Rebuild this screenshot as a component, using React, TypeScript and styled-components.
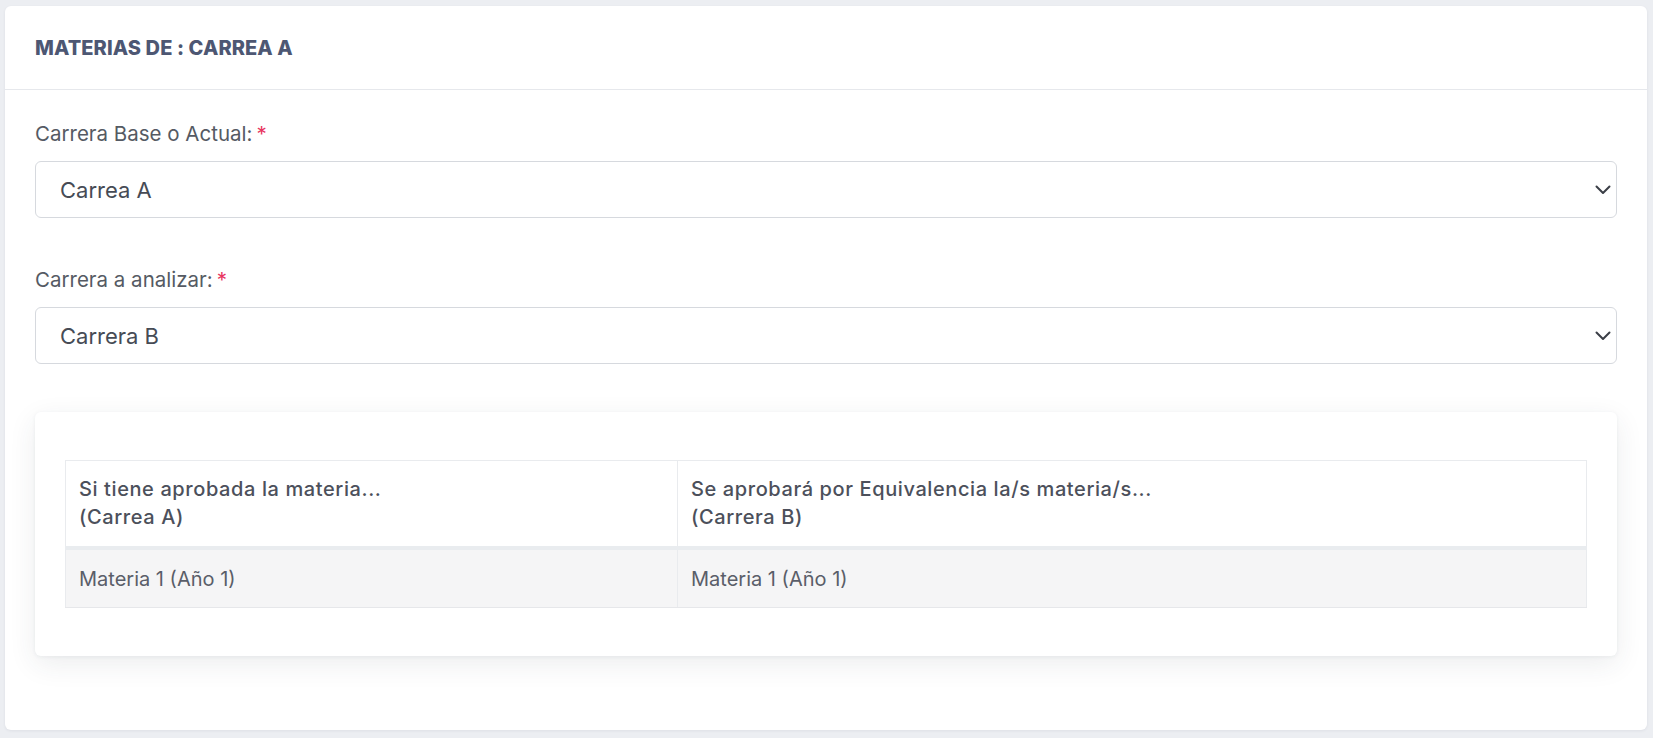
import React from "react";
import styled, { createGlobalStyle } from "styled-components";

const Global = createGlobalStyle`
  html, body { margin: 0; padding: 0; }
  body {
    background: #eceef2;
    font-family: "Inter", "Noto Sans", sans-serif;
    color: #4a4e58;
  }
  * { box-sizing: border-box; }
`;

const Page = styled.div`
  padding: 6px 6px 7px 5px;
`;

const Card = styled.section`
  background: #ffffff;
  border-radius: 6px;
  box-shadow: 0 1px 3px rgba(60, 70, 90, 0.08);
`;

const CardHeader = styled.header`
  height: 84px;
  display: flex;
  align-items: center;
  padding: 0 30px;
  border-bottom: 1px solid #e6e8ec;
`;

const Title = styled.h2`
  margin: 0;
  font-size: 20px;
  font-weight: 800;
  color: #4d5773;
  letter-spacing: 0.1px;
`;

const CardBody = styled.div`
  padding: 30px 30px 30px;
`;

const FormGroup = styled.div`
  margin-bottom: 48px;
`;

const Label = styled.label`
  display: block;
  font-size: 20.5px;
  line-height: 27px;
  color: #555a63;
  margin-bottom: 14px;
`;

const Required = styled.span`
  color: #e8365f;
  margin-left: 4px;
`;

const SelectWrap = styled.div`
  position: relative;
`;

const Select = styled.select`
  width: 100%;
  height: 57px;
  appearance: none;
  -webkit-appearance: none;
  background: #ffffff;
  border: 1px solid #d6d9de;
  border-radius: 6px;
  padding: 0 24px;
  font-family: inherit;
  font-size: 22px;
  color: #464b55;
  outline: none;
`;

const Chevron = styled.svg`
  position: absolute;
  right: 6px;
  top: 50%;
  transform: translateY(-50%);
  pointer-events: none;
`;

const InnerCard = styled.div`
  background: #ffffff;
  border-radius: 6px;
  box-shadow: 0 8px 28px rgba(40, 50, 70, 0.09), 0 1px 4px rgba(40, 50, 70, 0.06);
  padding: 48px 30px 48px;
  margin-bottom: 44px;
`;

const Table = styled.table`
  width: 100%;
  border-collapse: collapse;
  border: 1px solid #e9ebee;
`;

const HeadCell = styled.th<{ $w?: string }>`
  width: ${(p) => p.$w || "auto"};
  text-align: left;
  font-weight: 500;
  font-size: 20px;
  letter-spacing: 0.6px;
  line-height: 28px;
  color: #4c505b;
  padding: 14px 13px 15px;
  border-right: 1px solid #e9ebee;
  border-bottom: 4px solid #e9ecef;
  vertical-align: top;
`;

const BodyRow = styled.tr`
  background: #f5f5f6;
`;

const Cell = styled.td`
  font-size: 20px;
  line-height: 28px;
  color: #5a5e69;
  padding: 15px 13px 14px;
  border-right: 1px solid #e9ebee;
  border-bottom: 1px solid #e6e7ea;
`;

const ChevronIcon = () => (
  <Chevron width="16" height="10" viewBox="0 0 16 10" fill="none">
    <path d="M1.5 1.5l6.5 6.5 6.5-6.5" stroke="#3b3f47" strokeWidth="2" strokeLinecap="round" strokeLinejoin="round" />
  </Chevron>
);

const Field = ({ label, value }: { label: string; value: string }) => (
  <FormGroup>
    <Label>
      {label}
      <Required>*</Required>
    </Label>
    <SelectWrap>
      <Select defaultValue={value}>
        <option value={value}>{value}</option>
      </Select>
      <ChevronIcon />
    </SelectWrap>
  </FormGroup>
);

export default function App() {
  return (
    <>
      <Global />
      <Page>
        <Card>
          <CardHeader>
            <Title>MATERIAS DE : CARREA A</Title>
          </CardHeader>
          <CardBody>
            <Field label="Carrera Base o Actual:" value="Carrea A" />
            <Field label="Carrera a analizar:" value="Carrera B" />
            <InnerCard>
              <Table>
                <thead>
                  <tr>
                    <HeadCell $w="612px">
                      Si tiene aprobada la materia...
                      <br />
                      (Carrea A)
                    </HeadCell>
                    <HeadCell>
                      Se aprobará por Equivalencia la/s materia/s...
                      <br />
                      (Carrera B)
                    </HeadCell>
                  </tr>
                </thead>
                <tbody>
                  <BodyRow>
                    <Cell>Materia 1 (Año 1)</Cell>
                    <Cell>Materia 1 (Año 1)</Cell>
                  </BodyRow>
                </tbody>
              </Table>
            </InnerCard>
          </CardBody>
        </Card>
      </Page>
    </>
  );
}
